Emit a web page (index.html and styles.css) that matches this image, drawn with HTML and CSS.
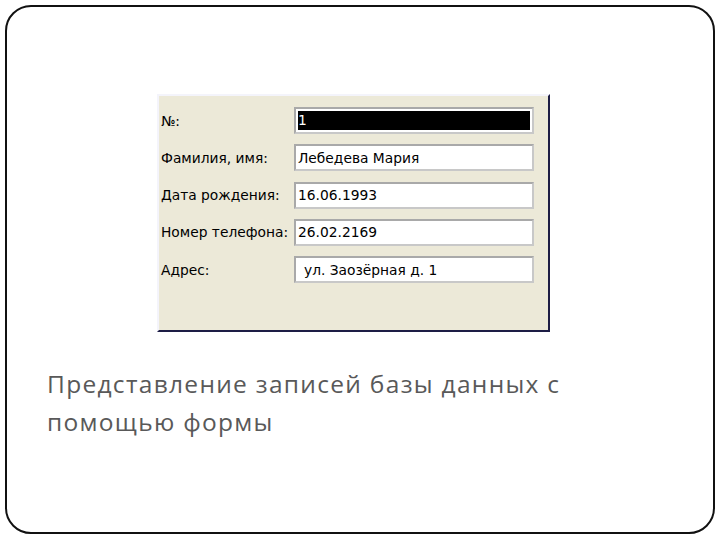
FILE: index.html
```html
<!DOCTYPE html>
<html lang="ru">
<head>
<meta charset="utf-8">
<link rel="stylesheet" href="styles.css">
</head>
<body>
<div class="slide">
  <div class="form">
    <div class="row"><span class="label">№:</span><span class="field selected"><span class="sel">1</span></span></div>
    <div class="row"><span class="label">Фамилия, имя:</span><span class="field">Лебедева Мария</span></div>
    <div class="row"><span class="label">Дата рождения:</span><span class="field">16.06.1993</span></div>
    <div class="row"><span class="label">Номер телефона:</span><span class="field">26.02.2169</span></div>
    <div class="row"><span class="label">Адрес:</span><span class="field indent">ул. Заозёрная д. 1</span></div>
  </div>
  <p class="caption">Представление записей базы данных с помощью формы</p>
</div>
</body>
</html>
```
FILE: styles.css
```css
html, body { margin: 0; padding: 0; background: #fff; }
.slide {
  box-sizing: border-box;
  margin: 5px 0 0 5px;
  width: 710px;
  height: 529px;
  border: 2px solid #111;
  border-radius: 26px;
  padding: 87px 0 0 150px;
}
.form {
  box-sizing: border-box;
  width: 393px;
  height: 238px;
  background: #ece9d8;
  border-top: 2px solid #f4f4fb;
  border-left: 2px solid #f4f4fb;
  border-right: 2px solid #1d1d45;
  border-bottom: 2px solid #1d1d45;
  padding: 11px 0 0 2px;
  font-family: "DejaVu Sans", sans-serif;
  font-size: 13.8px;
  color: #000;
}
.row {
  display: flex;
  align-items: center;
  height: 27px;
  margin-bottom: 10.3px;
}
.label { width: 133px; flex: none; }
.field {
  box-sizing: border-box;
  width: 240px;
  height: 27px;
  background: #fff;
  border: 2px solid #a9a9a9;
  border-right-color: #c8c8c8;
  border-bottom-color: #c8c8c8;
  padding: 0 2px;
  display: flex;
  align-items: center;
}
.field.selected { background: #fff; padding: 2px; }
.sel {
  display: block;
  width: 100%;
  height: 100%;
  background: #000;
  color: #fff;
  line-height: 19px;
}
.field.indent { padding-left: 8px; }
.caption {
  margin: 33px 0 0 -110px;
  width: 540px;
  font-family: "Open Sans", sans-serif;
  font-size: 24.5px;
  line-height: 38px;
  color: #595959;
  letter-spacing: 1.3px;
}
```
